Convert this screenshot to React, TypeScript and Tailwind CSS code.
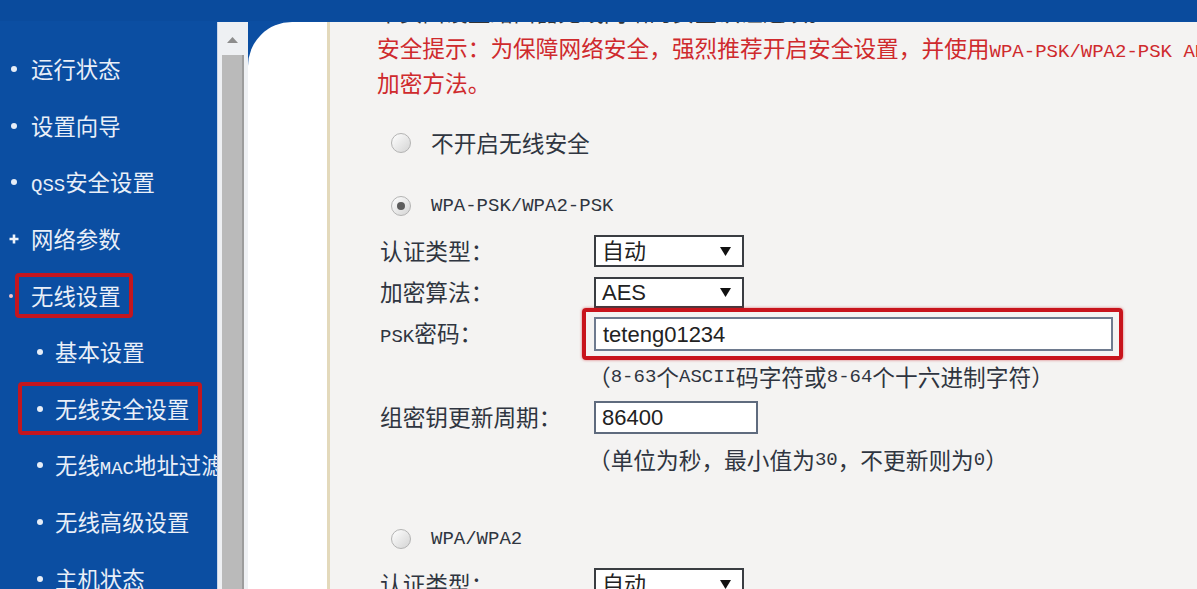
import React from 'react';

function Mono({ children }: { children: React.ReactNode }) {
  return <span className="font-['Liberation_Mono','Noto_Sans_CJK_SC',monospace] text-[19px]">{children}</span>;
}

function Dot() {
  return <span className="h-[6px] w-[6px] shrink-0 rounded-full bg-[#e6edf7]" />;
}

function NavItem({ children }: { children: React.ReactNode }) {
  return (
    <div className="flex h-[56.6px] items-center pl-[11px]">
      <Dot />
      <span className="ml-[14px]">{children}</span>
    </div>
  );
}

function SubItem({ children }: { children: React.ReactNode }) {
  return (
    <div className="flex h-[56.6px] items-center pl-[37px]">
      <Dot />
      <span className="ml-[12px]">{children}</span>
    </div>
  );
}

function Sidebar() {
  return (
    <div className="w-[217px] shrink-0 overflow-hidden whitespace-nowrap pt-[19px] text-[22.4px] text-[#e9eff8]">
      <NavItem>运行状态</NavItem>
      <NavItem>设置向导</NavItem>
      <NavItem>
        <Mono>QSS</Mono>安全设置
      </NavItem>
      <div className="flex h-[56.6px] items-center pl-[9px]">
        <svg width="10" height="10" viewBox="0 0 10 10" className="shrink-0">
          <path d="M5 0.5v9M0.5 5h9" stroke="#eef3fa" strokeWidth="2.6" />
        </svg>
        <span className="ml-[12px]">网络参数</span>
      </div>
      <div className="flex h-[56.6px] items-center pl-[9px]">
        <span className="h-[4px] w-[4px] shrink-0 rounded-full bg-[#f3c2cb]" />
        <span className="ml-[2px] flex h-[45px] items-center rounded-[4px] border-4 border-[#c3161f] pl-[12px] pr-[8px]">
          无线设置
        </span>
      </div>
      <SubItem>基本设置</SubItem>
      <div className="flex h-[56.6px] items-center pl-[18px]">
        <span className="flex h-[53px] items-center rounded-[4px] border-4 border-[#c3161f] pl-[15px] pr-[9px]">
          <Dot />
          <span className="ml-[12px]">无线安全设置</span>
        </span>
      </div>
      <SubItem>
        无线<Mono>MAC</Mono>地址过滤
      </SubItem>
      <SubItem>无线高级设置</SubItem>
      <SubItem>主机状态</SubItem>
    </div>
  );
}

function Scrollbar() {
  return (
    <div className="flex w-[31px] shrink-0 flex-col border-l border-[#c9d6ea] bg-[#eef0f3]">
      <div className="flex h-[33px] items-center justify-center pr-[1px] pt-[2px]">
        <svg width="11" height="6" viewBox="0 0 11 6">
          <path d="M0 6L5.5 0L11 6z" fill="#8d8d8d" />
        </svg>
      </div>
      <div className="ml-[4px] w-[22px] flex-1 border-r-2 border-[#9c9c9c] bg-[#bababa]" />
    </div>
  );
}

function Radio({ checked }: { checked?: boolean }) {
  return (
    <span className="flex h-[20px] w-[20px] shrink-0 items-center justify-center rounded-full border border-[#b3b3b3] bg-linear-to-br from-white to-[#d4d4d4]">
      {checked && <span className="h-[8px] w-[8px] rounded-full bg-[#5c5c5c]" />}
    </span>
  );
}

function Select({ value, tall }: { value: string; tall?: boolean }) {
  return (
    <div
      className={
        tall
          ? 'flex h-[32px] w-[150px] items-center justify-between border-2 border-[#3a3d42] bg-white pl-[6px] pr-[11px]'
          : 'flex h-[31px] w-[150px] items-center justify-between border-2 border-[#3a3d42] bg-white pl-[6px] pr-[11px]'
      }
    >
      <span className="font-['Liberation_Sans','Noto_Sans_CJK_SC',sans-serif] text-[22px] text-[#222]">{value}</span>
      <svg width="11" height="9" viewBox="0 0 11 9">
        <path d="M0 0h11L5.5 9z" fill="#111" />
      </svg>
    </div>
  );
}

function FormRow({ label, h, children }: { label: React.ReactNode; h: string; children: React.ReactNode }) {
  return (
    <div className={`flex items-center ${h}`}>
      <div className="w-[217px] shrink-0 pl-[3px]">{label}</div>
      {children}
    </div>
  );
}

function Content() {
  return (
    <div className="min-w-0 flex-1 overflow-hidden whitespace-nowrap bg-[#f4f3f2] pl-[47px] text-[22.7px] text-[#2f3540]">
      {/* scrolled-off line, only its lower edge peeks out */}
      <div className="-mt-[27px] h-[35px] leading-[33px] text-[#333]">本页面设置路由器无线网络的安全认证选项。</div>
      <div className="h-[35px] leading-[35px] text-[#cf2a2d]">
        安全提示：为保障网络安全，强烈推荐开启安全设置，并使用<Mono>WPA-PSK/WPA2-PSK AES</Mono>
      </div>
      <div className="h-[35px] leading-[35px] text-[#cf2a2d]">加密方法。</div>

      <div className="mt-[24px] flex h-[38px] items-center gap-[20px] pl-[14px]">
        <Radio />
        <span>不开启无线安全</span>
      </div>

      <div className="mt-[25px] flex h-[38px] items-center gap-[20px] pl-[14px]">
        <Radio checked />
        <Mono>WPA-PSK/WPA2-PSK</Mono>
      </div>

      <div className="mt-[5px]">
        <FormRow label="认证类型：" h="h-[42px]">
          <Select value="自动" tall />
        </FormRow>
        <FormRow label="加密算法：" h="h-[41px]">
          <Select value="AES" />
        </FormRow>
        <FormRow
          label={
            <>
              <Mono>PSK</Mono>密码：
            </>
          }
          h="h-[42px]"
        >
          <div className="-ml-[12px] rounded-[4px] border-4 border-[#c8141c] py-[5px] pl-[8px] pr-[6px] shadow-[0_0_3px_rgba(200,20,28,0.6)]">
            <div className="flex h-[34px] w-[519px] items-center border-2 border-[#6e7a8e] bg-white pl-[7px] font-['Liberation_Sans',sans-serif] text-[22px] text-[#222]">
              teteng01234
            </div>
          </div>
        </FormRow>
      </div>

      <div className="mt-[4px] flex h-[36px] items-center pl-[211px]">
        （<Mono>8-63</Mono>个<Mono>ASCII</Mono>码字符或<Mono>8-64</Mono>个十六进制字符）
      </div>

      <div className="mt-[4px]">
        <FormRow label="组密钥更新周期：" h="h-[36px]">
          <div className="flex h-[33px] w-[164px] items-center border-2 border-[#5f6b7e] bg-white pl-[6px] font-['Liberation_Sans',sans-serif] text-[22px] text-[#222]">
            86400
          </div>
        </FormRow>
      </div>

      <div className="mt-[7px] flex h-[36px] items-center pl-[211px]">
        （单位为秒，最小值为<Mono>30</Mono>，不更新则为<Mono>0</Mono>）
      </div>

      <div className="mt-[42px] flex h-[38px] items-center gap-[20px] pl-[14px]">
        <Radio />
        <Mono>WPA/WPA2</Mono>
      </div>

      <div className="mt-[5px]">
        <FormRow label="认证类型：" h="h-[42px]">
          <Select value="自动" tall />
        </FormRow>
      </div>
    </div>
  );
}

export default function App() {
  return (
    <div className="flex h-[589px] w-[1197px] flex-col overflow-hidden bg-[#0b4ea2] font-['Noto_Sans_CJK_SC',sans-serif]">
      <div className="relative z-10 h-[21px] shrink-0 bg-[#0a4b9d]" />
      <div className="flex min-h-0 flex-1 pt-[1px]">
        <Sidebar />
        <Scrollbar />
        <div className="w-[79px] shrink-0 rounded-tl-[44px] bg-white" />
        <div className="w-[3px] shrink-0 bg-[#e3d9bb]" />
        <Content />
      </div>
    </div>
  );
}
